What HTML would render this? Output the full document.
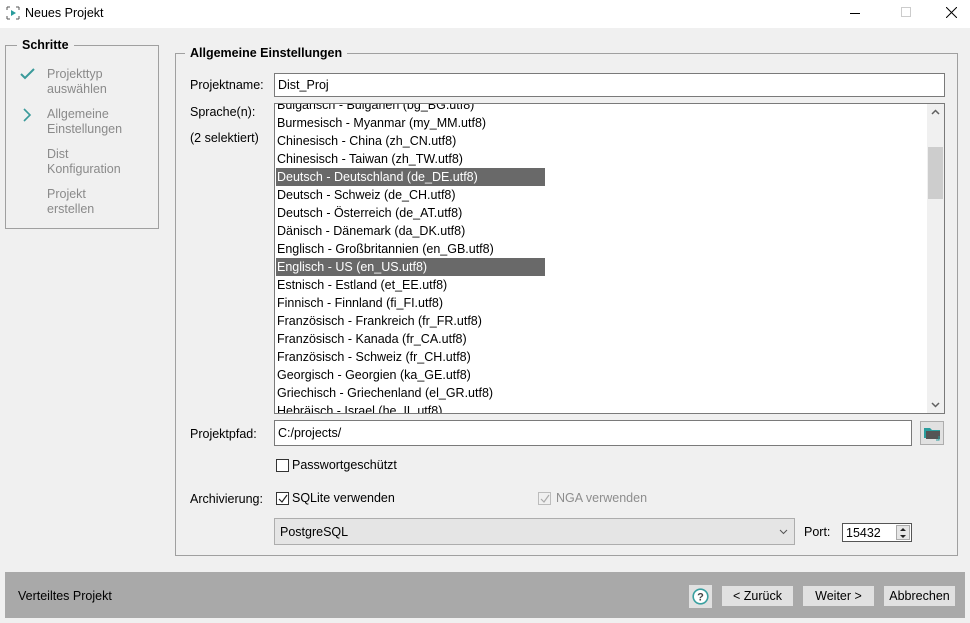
<!DOCTYPE html>
<html><head><meta charset="utf-8"><style>
*{margin:0;padding:0;box-sizing:border-box}
body{width:970px;height:623px;background:#f0f0f0;font-family:"Liberation Sans",Arial,sans-serif;font-size:12px;color:#000;position:relative;overflow:hidden}
.a{position:absolute}
.t{white-space:nowrap}
.grp{position:absolute;border:1px solid #a0a0a0}
.gt{position:absolute;background:#f0f0f0;font-weight:bold;font-size:12.5px;padding:0 5px}
.inp{position:absolute;background:#fff;border:1px solid #7a7a7a}
.row{height:18px;line-height:18px;padding-left:1px;white-space:nowrap;width:269px}
.sel{background:#696969;color:#fff}
.cb{position:absolute;width:13px;height:13px;border:1px solid #333;background:#fff}
.btn{position:absolute;background:#e1e1e1;height:20px;line-height:20px;text-align:center;font-size:12.5px}
.gray{color:#8a8a8a}
</style></head><body>
<div class="a" style="left:0;top:0;width:970px;height:28px;background:#fff"></div>
<svg class="a" style="left:6px;top:6px" width="14" height="14"><path d="M1 1h3M1 1v3M13 1h-3M13 1v3M1 13h3M1 13v-3M13 13h-3M13 13v-3" stroke="#555" fill="none"/><path d="M5 4l5 3-5 3z" fill="#2a9d9d"/></svg>
<div class="a t" style="left:25px;top:6px;font-size:12.5px">Neues Projekt</div>
<div class="a" style="left:850px;top:13px;width:10px;height:1px;background:#000"></div>
<div class="a" style="left:901px;top:7px;width:10px;height:10px;border:1px solid #ccc"></div>
<svg class="a" style="left:946px;top:7px" width="11" height="11"><path d="M0 0L11 11M11 0L0 11" stroke="#000"/></svg>

<div class="grp" style="left:5px;top:45px;width:154px;height:184px"></div>
<div class="gt" style="left:17px;top:38px">Schritte</div>
<svg class="a" style="left:20px;top:68px" width="16" height="12"><path d="M1 6l4 4 9-9" stroke="#3a9a9a" stroke-width="2" fill="none"/></svg>
<svg class="a" style="left:22px;top:108px" width="10" height="14"><path d="M2 1l6 6-6 6" stroke="#3a9a9a" stroke-width="1.6" fill="none"/></svg>
<div class="a gray" style="left:47px;top:67px;line-height:15px;font-size:12.5px">Projekttyp<br>auswählen</div>
<div class="a gray" style="left:47px;top:107px;line-height:15px;font-size:12.5px">Allgemeine<br>Einstellungen</div>
<div class="a gray" style="left:47px;top:147px;line-height:15px;font-size:12.5px">Dist<br>Konfiguration</div>
<div class="a gray" style="left:47px;top:187px;line-height:15px;font-size:12.5px">Projekt<br>erstellen</div>

<div class="grp" style="left:175px;top:53px;width:783px;height:503px"></div>
<div class="gt" style="left:185px;top:46px">Allgemeine Einstellungen</div>

<div class="a t" style="left:190px;top:78px;font-size:12.5px">Projektname:</div>
<div class="inp" style="left:274px;top:73px;width:671px;height:24px"><span class="a t" style="left:3px;top:4px;font-size:12.5px">Dist_Proj</span></div>
<div class="a t" style="left:190px;top:105px;font-size:12.5px">Sprache(n):</div>
<div class="a t" style="left:190px;top:131px;font-size:12.5px">(2 selektiert)</div>

<div class="inp" style="left:274px;top:103px;width:671px;height:311px;overflow:hidden">
<div class="a" style="left:1px;top:-8px;font-size:12.5px">
<div class="row">Bulgarisch - Bulgarien (bg_BG.utf8)</div>
<div class="row">Burmesisch - Myanmar (my_MM.utf8)</div>
<div class="row">Chinesisch - China (zh_CN.utf8)</div>
<div class="row">Chinesisch - Taiwan (zh_TW.utf8)</div>
<div class="row sel">Deutsch - Deutschland (de_DE.utf8)</div>
<div class="row">Deutsch - Schweiz (de_CH.utf8)</div>
<div class="row">Deutsch - Österreich (de_AT.utf8)</div>
<div class="row">Dänisch - Dänemark (da_DK.utf8)</div>
<div class="row">Englisch - Großbritannien (en_GB.utf8)</div>
<div class="row sel">Englisch - US (en_US.utf8)</div>
<div class="row">Estnisch - Estland (et_EE.utf8)</div>
<div class="row">Finnisch - Finnland (fi_FI.utf8)</div>
<div class="row">Französisch - Frankreich (fr_FR.utf8)</div>
<div class="row">Französisch - Kanada (fr_CA.utf8)</div>
<div class="row">Französisch - Schweiz (fr_CH.utf8)</div>
<div class="row">Georgisch - Georgien (ka_GE.utf8)</div>
<div class="row">Griechisch - Griechenland (el_GR.utf8)</div>
<div class="row">Hebräisch - Israel (he_IL.utf8)</div>
</div>
<div class="a" style="right:0;top:0;width:17px;height:309px;background:#f0f0f0"></div>
<div class="a" style="right:1px;top:43px;width:15px;height:52px;background:#cdcdcd"></div>
<svg class="a" style="right:4px;top:5px" width="9" height="6"><path d="M1 5l3.5-3.5L8 5" stroke="#606060" stroke-width="1.5" fill="none"/></svg>
<svg class="a" style="right:4px;bottom:5px" width="9" height="6"><path d="M1 1l3.5 3.5L8 1" stroke="#606060" stroke-width="1.5" fill="none"/></svg>
</div>

<div class="a t" style="left:190px;top:427px;font-size:12.5px">Projektpfad:</div>
<div class="inp" style="left:274px;top:420px;width:638px;height:26px"><span class="a t" style="left:3px;top:5px;font-size:12.5px">C:/projects/</span></div>
<div class="a" style="left:920px;top:421px;width:24px;height:24px;background:#e1e1e1;border:1px solid #adadad"></div>
<svg class="a" style="left:923px;top:425px" width="20" height="17"><path d="M1 3h6l2 2h8v8H1z" fill="#2a9d9d"/><path d="M3 6h14v8H3z" fill="#555"/><path d="M16 11v4h-3" stroke="#2a9d9d" fill="none"/></svg>

<div class="cb" style="left:276px;top:459px"></div>
<div class="a t" style="left:292px;top:458px;font-size:12.5px">Passwortgeschützt</div>

<div class="a t" style="left:190px;top:492px;font-size:12.5px">Archivierung:</div>
<div class="cb" style="left:276px;top:492px"></div>
<svg class="a" style="left:278px;top:494px" width="10" height="10"><path d="M1 5l3 3 5-7" stroke="#222" stroke-width="1.2" fill="none"/></svg>
<div class="a t" style="left:292px;top:491px;font-size:12.5px">SQLite verwenden</div>
<div class="cb" style="left:538px;top:492px;border-color:#bcbcbc;background:#f0f0f0"></div>
<svg class="a" style="left:540px;top:494px" width="10" height="10"><path d="M1 5l3 3 5-7" stroke="#aaa" stroke-width="1.2" fill="none"/></svg>
<div class="a t" style="left:556px;top:491px;font-size:12.5px;color:#8d8d8d">NGA verwenden</div>

<div class="a" style="left:274px;top:518px;width:521px;height:27px;background:#e5e5e5;border:1px solid #adadad"><span class="a t" style="left:5px;top:6px;font-size:12.5px">PostgreSQL</span>
<svg class="a" style="right:6px;top:10px" width="9" height="6"><path d="M1 1l3.5 3.5L8 1" stroke="#555" fill="none"/></svg></div>
<div class="a t" style="left:804px;top:525px;font-size:12.5px">Port:</div>
<div class="inp" style="left:842px;top:523px;width:70px;height:19px;border-color:#555"><span class="a t" style="left:3px;top:2px;font-size:12.5px">15432</span>
<div class="a" style="right:1px;top:1px;width:14px;height:15px;background:#e6e6e6;border:1px solid #aaa"></div>
<svg class="a" style="right:4px;top:3px" width="8" height="12"><path d="M1 4l3-3 3 3zM1 8l3 3 3-3z" fill="#222"/></svg></div>

<div class="a" style="left:5px;top:572px;width:960px;height:46px;background:#a9a9a9"></div>
<div class="a t" style="left:18px;top:589px;font-size:12.5px">Verteiltes Projekt</div>
<div class="a" style="left:689px;top:585px;width:23px;height:23px;background:#e1e1e1"></div>
<svg class="a" style="left:692px;top:588px" width="17" height="17"><circle cx="8.5" cy="8.5" r="7.3" stroke="#3aa0a0" stroke-width="1.6" fill="#fff"/><text x="8.5" y="12.5" font-size="11" font-weight="bold" text-anchor="middle" fill="#444" font-family="Liberation Sans">?</text></svg>
<div class="btn" style="left:722px;top:586px;width:71px">&lt; Zurück</div>
<div class="btn" style="left:803px;top:586px;width:71px">Weiter &gt;</div>
<div class="btn" style="left:884px;top:586px;width:71px">Abbrechen</div>
</body></html>
